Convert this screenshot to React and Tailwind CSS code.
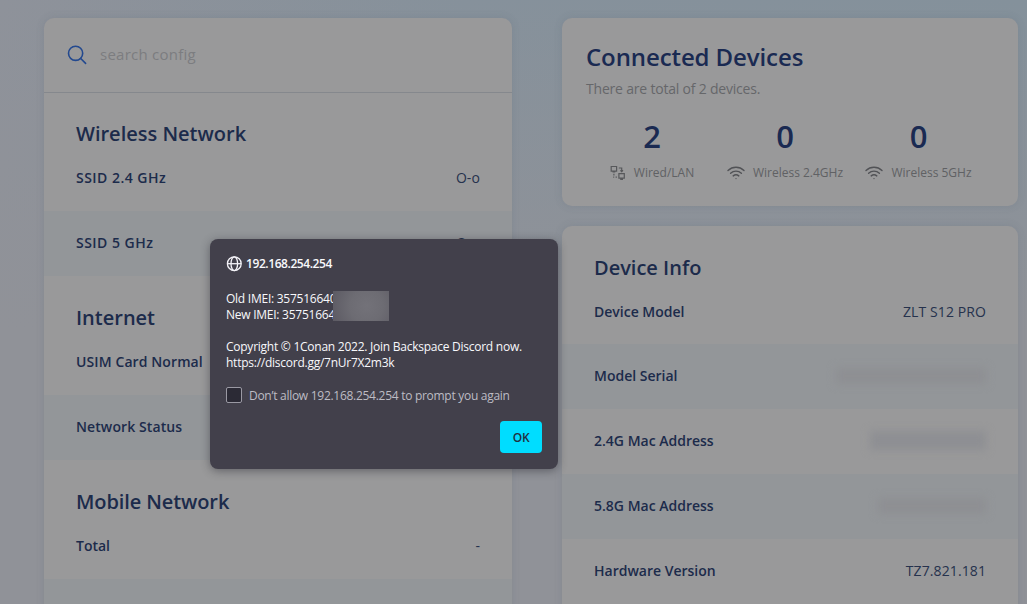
import React from "react";

const SearchIcon = () => (
  <svg width="20" height="20" viewBox="0 0 20 20" fill="none" stroke="#23498f" strokeWidth="1.6" strokeLinecap="round">
    <circle cx="8.6" cy="8.3" r="7.1" />
    <path d="M13.7 13.5 18.6 18.4" />
  </svg>
);

const WiredIcon = () => (
  <svg width="16" height="16" viewBox="0 0 16 16" fill="none" stroke="#57585b" strokeWidth="1.2">
    <path d="M1.200 1.500h5.400v4.600H1.200zM2.500 6.900h2.800M8.900 8.600h5.400v4.600H8.900zM10.200 14.400h2.800" />
    <path d="M8.800 3h2.900v3.400M10.400 5.300l1.300 1.300 1.300-1.300" />
    <path d="M3.900 8.800v1.600M3.200 12.200h1M5.600 12.200h1.300" />
  </svg>
);

const WifiIcon = () => (
  <svg width="18" height="14" viewBox="0 0 18 14" fill="none" stroke="#515256" strokeWidth="1.4" strokeLinecap="round">
    <path d="M1 4.400C5.500.2 12.500.2 17 4.400" />
    <path d="M3.600 7.200c3-2.800 7.800-2.800 10.800 0" />
    <path d="M6.200 9.900c1.600-1.400 4-1.400 5.600 0" />
    <circle cx="9" cy="12.600" r=".7" fill="#515256" stroke="none" />
  </svg>
);

const GlobeIcon = () => (
  <svg width="16" height="16" viewBox="0 0 16 16" fill="none" stroke="#f4f3f8" strokeWidth="1.3">
    <circle cx="8.300" cy="7.700" r="6.900" />
    <ellipse cx="8.300" cy="7.700" rx="3.300" ry="6.900" />
    <path d="M1.400 7.700h13.800" />
  </svg>
);

const Row = ({ label, value, shaded, spacing = "tracking-normal", height = "h-[65px]" }) => (
  <div className={`flex shrink-0 items-center justify-between px-8 pb-[2px] text-[14px] ${height} ${shaded ? "bg-[#939699]" : ""}`}>
    <span className={`font-semibold ${spacing}`}>{label}</span>
    <span className="tracking-[0.1px] text-[#26324d]">{value}</span>
  </div>
);

const Heading = ({ children, className }) => (
  <h2 className={`flex shrink-0 items-center px-8 text-[20px] font-semibold ${className}`}>{children}</h2>
);

const Stat = ({ count, icon, label, className }) => (
  <div className={`flex flex-col items-center ${className}`}>
    <span className="text-[31px] leading-[40px] font-semibold text-[#1a2a52]">{count}</span>
    <div className="mt-[7px] flex h-[20px] items-center gap-2 text-[12px] whitespace-nowrap text-[#606164]">
      {icon}
      <span>{label}</span>
    </div>
  </div>
);

const Dialog = () => (
  <div className="absolute top-[239px] left-[210px] flex h-[230px] w-[348px] flex-col rounded-[8px] bg-[#42404b] px-4 text-[12px] leading-4 tracking-[-0.25px] text-[#f8f8fb] shadow-[0_2px_10px_rgba(30,30,40,0.45)]">
    <div className="mt-[16px] flex h-[17px] items-center gap-[4px]">
      <GlobeIcon />
      <span className="font-semibold tracking-[-0.42px]">192.168.254.254</span>
    </div>
    <div className="relative mt-[19px] h-8 whitespace-nowrap">
      <div>Old IMEI: 357516640</div>
      <div>New IMEI: 35751664</div>
      <div className="absolute top-0 left-[107px] h-[30px] w-[56px] bg-[radial-gradient(circle_at_60%_50%,#737279_0%,#6d6c73_45%,#5c5a63_100%)]" />
    </div>
    <div className="mt-4 whitespace-nowrap">
      <div>Copyright © 1Conan 2022. Join Backspace Discord now.</div>
      <div>https://discord.gg/7nUr7X2m3k</div>
    </div>
    <div className="mt-4 flex h-4 items-center gap-[7px] whitespace-nowrap text-[#bdbcc4]">
      <span className="h-4 w-4 rounded-[2px] border border-[#9a99a3] bg-[#2b2a35]" />
      <span className="pt-[2px] tracking-[-0.28px]">Don’t allow 192.168.254.254 to prompt you again</span>
    </div>
    <button className="mt-[18px] h-8 w-[42px] self-end rounded-[4px] bg-[#00ddff] pt-px font-semibold text-[#20303f]">OK</button>
  </div>
);

const Redacted = ({ className }) => <span className={`block bg-[#8e8f93] blur-[4px] ${className}`} />;

export default function App() {
  return (
    <div className="relative h-[604px] w-[1027px] overflow-hidden bg-[#909298] bg-[linear-gradient(to_bottom,transparent_0%,#909298_55%),linear-gradient(to_right,#8e929a_0%,#86919b_45%,#84919b_100%)] font-['Open_Sans','Noto_Sans',sans-serif] text-[#1c2b4b]">
      <div className="flex items-start gap-[50px] pt-[18px] pl-[44px]">
        <section className="flex h-[600px] w-[468px] flex-col overflow-hidden rounded-[10px] bg-[#99999a] shadow-[0_0_8px_rgba(70,80,100,0.15)]">
          <div className="flex h-[75px] shrink-0 items-center gap-3 border-b border-[#85888d] pl-[23px] text-[15px] tracking-[0.25px] text-[#7c7d80]">
            <SearchIcon />
            <span className="pb-[2px] pl-px">search config</span>
          </div>
          <Heading className="h-[53px] pt-[29px]">Wireless Network</Heading>
          <Row label="SSID 2.4 GHz" value="O-o" spacing="tracking-[0.48px]" />
          <Row label="SSID 5 GHz" value="O-o" spacing="tracking-[0.48px]" shaded />
          <Heading className="h-[54px] pt-[30px]">Internet</Heading>
          <Row label="USIM Card Normal" spacing="tracking-[0.1px]" />
          <Row label="Network Status" spacing="tracking-[0.1px]" shaded />
          <Heading className="h-[54px] pt-[29px] tracking-[-0.1px]">Mobile Network</Heading>
          <Row label="Total" value="-" />
          <Row label="" shaded />
        </section>

        <div className="flex w-[456px] flex-col gap-5">
          <section className="h-[188px] rounded-[10px] bg-[#99999a] px-6 pt-[22px] shadow-[0_0_8px_rgba(70,80,100,0.15)]">
            <h1 className="text-[24px] leading-[34px] font-semibold tracking-[-0.1px] text-[#1a2a52]">Connected Devices</h1>
            <p className="mt-[5px] text-[14px] leading-5 tracking-[-0.2px] text-[#66676a]">There are total of 2 devices.</p>
            <div className="mt-[17px] flex">
              <Stat count="2" icon={<WiredIcon />} label="Wired/LAN" className="w-[132px]" />
              <Stat count="0" icon={<WifiIcon />} label="Wireless 2.4GHz" className="w-[134px]" />
              <Stat count="0" icon={<WifiIcon />} label="Wireless 5GHz" className="w-[133px]" />
            </div>
          </section>
          <section className="flex h-[400px] flex-col overflow-hidden rounded-[10px] bg-[#99999a] shadow-[0_0_8px_rgba(70,80,100,0.15)]">
            <Heading className="h-[54px] pt-[29px]">Device Info</Heading>
            <Row label="Device Model" value="ZLT S12 PRO" height="h-[64px]" />
            <Row label="Model Serial" value={<Redacted className="h-[16px] w-[150px]" />} shaded />
            <Row label="2.4G Mac Address" value={<Redacted className="h-[19px] w-[116px]" />} />
            <Row label="5.8G Mac Address" value={<Redacted className="h-[16px] w-[108px]" />} shaded />
            <Row label="Hardware Version" value="TZ7.821.181" />
          </section>
        </div>
      </div>
      <Dialog />
    </div>
  );
}
